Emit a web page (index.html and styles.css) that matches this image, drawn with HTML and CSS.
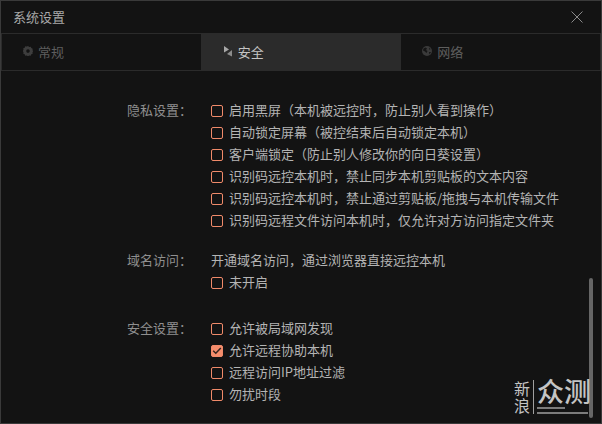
FILE: index.html
```html
<!DOCTYPE html>
<html lang="zh-CN">
<head>
<meta charset="utf-8">
<title>系统设置</title>
<link rel="stylesheet" href="styles.css">
</head>
<body>
<div class="window">
  <header class="titlebar">
    <span class="title">系统设置</span>
    <svg class="close" width="12" height="12" viewBox="0 0 12 12"><path d="M.5.5l11 11M11.500.5l-11 11" stroke="#8a8a8a" fill="none"/></svg>
  </header>
  <nav class="tabs">
    <div class="tab">
      <svg class="tab-icon" width="10" height="10" viewBox="0 0 10 10"><path fill-rule="evenodd" fill="#3d3d3d" d="M5 0l1.200.9 1.500-.2.600 1.400 1.400.6-.2 1.500L10.400 5l-.9 1.200.2 1.500-1.400.6-.6 1.400-1.500-.2L5 10.400l-1.200-.9-1.500.2-.6-1.400L.3 7.700l.2-1.500L-.4 5l.9-1.200-.2-1.500 1.400-.6.6-1.400 1.500.2zM5 3.300a1.800 1.800 0 100 3.600 1.800 1.800 0 000-3.600z"/></svg>
      <span>常规</span>
    </div>
    <div class="tab active">
      <svg class="tab-icon" width="9" height="11" viewBox="0 0 9 11"><path fill="#a8a8a8" d="M0 0l5 3.500L0 6.500z"/><path fill="#8c8c8c" d="M8 4v6.500L3 8z"/></svg>
      <span>安全</span>
    </div>
    <div class="tab tab-net">
      <svg class="tab-icon" width="10" height="10" viewBox="0 0 10 10"><circle cx="5" cy="5" r="5" fill="#3a3a3a"/><path fill="#151515" d="M1.500 2.500l2-1 1.500 1-1 1.500 1.500 1-1 2-1.500-1.500-2-1zM7 1.500l1.500 1.500-1 1zM7 6h2l-1.500 2.500z"/></svg>
      <span>网络</span>
    </div>
  </nav>
  <main class="content">
    <section class="group">
      <div class="group-label">隐私设置：</div>
      <div class="options">
        <label class="option"><i class="box"></i>启用黑屏（本机被远控时，防止别人看到操作）</label>
        <label class="option"><i class="box"></i>自动锁定屏幕（被控结束后自动锁定本机）</label>
        <label class="option"><i class="box"></i>客户端锁定（防止别人修改你的向日葵设置）</label>
        <label class="option"><i class="box"></i>识别码远控本机时，禁止同步本机剪贴板的文本内容</label>
        <label class="option"><i class="box"></i>识别码远控本机时，禁止通过剪贴板/拖拽与本机传输文件</label>
        <label class="option"><i class="box"></i>识别码远程文件访问本机时，仅允许对方访问指定文件夹</label>
      </div>
    </section>
    <section class="group group-domain">
      <div class="group-label">域名访问：</div>
      <div class="options">
        <div class="option">开通域名访问，通过浏览器直接远控本机</div>
        <label class="option"><i class="box"></i>未开启</label>
      </div>
    </section>
    <section class="group group-safety">
      <div class="group-label">安全设置：</div>
      <div class="options">
        <label class="option"><i class="box"></i>允许被局域网发现</label>
        <label class="option"><i class="box checked"><svg width="10" height="8" viewBox="0 0 10 8"><path d="M1.200 3.800l2.600 2.500 5-5.300" fill="none" stroke="#33231d" stroke-width="1.500"/></svg></i>允许远程协助本机</label>
        <label class="option"><i class="box"></i>远程访问IP地址过滤</label>
        <label class="option"><i class="box"></i>勿扰时段</label>
      </div>
    </section>
  </main>
  <div class="scrollbar"></div>
  <div class="watermark">
    <span class="wm-small">新<br>浪</span>
    <div class="wm-main">
      <span class="wm-big">众测</span>
      <i class="wm-line wm-line-short"></i>
      <i class="wm-line"></i>
    </div>
  </div>
</div>
</body>
</html>
```

FILE: styles.css
```css
* { box-sizing: border-box; }
html, body { margin: 0; padding: 0; }
body {
  width: 602px;
  height: 424px;
  overflow: hidden;
  font-family: "Noto Sans CJK SC", "Liberation Sans", sans-serif;
  font-size: 13px;
  background: #131313;
}
.window {
  position: relative;
  width: 602px;
  height: 424px;
  background: #131313;
  border: 1px solid #3a3a3a;
  color: #b4b4b4;
  display: flex;
  flex-direction: column;
}
.titlebar {
  height: 32px;
  flex: none;
  display: flex;
  align-items: center;
  justify-content: space-between;
  padding: 0 18px 1px 12px;
}
.title { color: #a9a9a9; line-height: 1; }
.tabs {
  height: 38px;
  flex: none;
  display: flex;
  border: 1px solid #2b2b2b;
  border-left-width: 0;
}
.tab {
  flex: 1;
  display: flex;
  align-items: center;
  gap: 5px;
  padding: 0 0 2px 22px;
  color: #5e5e5e;
}
.tab:first-child { box-shadow: inset 1px 0 #2b2b2b; }
.tab.active {
  padding-left: 23px;
  background: #2b2b2b;
  color: #c4c4c4;
}
.tab-net { padding-left: 21px; }
.tab-icon { flex: none; }
.content {
  padding-top: 29px;
  display: flex;
  flex-direction: column;
}
.group { display: flex; }
.group-domain { margin-top: 18px; }
.group-safety { margin-top: 24px; }
.group-label {
  width: 210px;
  padding-left: 126px;
  flex: none;
  line-height: 20px;
  color: #8f8f8f;
  white-space: nowrap;
}
.options { display: flex; flex-direction: column; }
.option {
  height: 22px;
  display: flex;
  align-items: flex-start;
  line-height: 20px;
  white-space: nowrap;
  color: #b4b4b4;
}
.box {
  width: 12px;
  height: 12px;
  flex: none;
  margin: 5px 6px 0 0;
  border: 1px solid #f08a6a;
  border-radius: 2px;
  display: flex;
  align-items: center;
  justify-content: center;
}
.box.checked { background: #f58d6c; }
.scrollbar {
  position: absolute;
  left: 588px;
  top: 277px;
  width: 4px;
  height: 140px;
  border-radius: 2px;
  background: #666;
}
.watermark {
  position: absolute;
  left: 513px;
  top: 379px;
  display: flex;
  align-items: flex-start;
  color: #c4c4c4;
}
.wm-small {
  width: 20px;
  height: 34px;
  font-size: 16px;
  line-height: 17px;
  border-right: 1px solid #a0a0a0;
}
.wm-main {
  width: 54px;
  padding-left: 3px;
  display: flex;
  flex-direction: column;
}
.wm-big {
  height: 27px;
  margin-top: -3px;
  font-size: 27px;
  line-height: 27px;
  font-weight: 500;
  white-space: nowrap;
}
.wm-line {
  height: 2px;
  background: #7c7c7c;
}
.wm-line-short {
  width: 28px;
  margin-top: 3px;
  margin-bottom: 3px;
}
```
